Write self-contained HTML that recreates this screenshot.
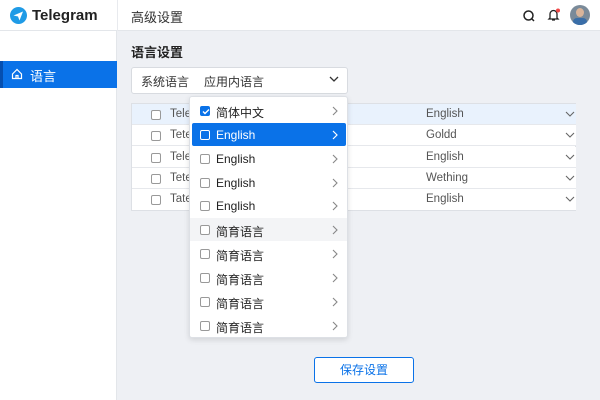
<!DOCTYPE html><html><head><meta charset="utf-8"><style>
*{margin:0;padding:0;box-sizing:border-box}
body{width:600px;height:400px;overflow:hidden;background:#eef0f4;font-family:"Liberation Sans","Noto Sans CJK SC",sans-serif;font-size:12px;color:#333;position:relative}
.abs{position:absolute}
.hdr{left:0;top:0;width:600px;height:31px;background:#fff;border-bottom:1px solid #e3e6ea}
.side{left:0;top:31px;width:117px;height:369px;background:#fff;border-right:1px solid #e3e6ea}
.cb{display:inline-block;width:10px;height:10px;border:1px solid #999;border-radius:2px;background:#fff}
.trow{left:132px;width:444px;height:21px;border-bottom:1px solid #e6e8ec;background:#fff;font-size:11.5px;color:#555}
.trow svg{position:absolute;left:433px;top:7px}
.dd{left:189px;top:96px;width:159px;height:242px;background:#fff;border:1px solid #dde0e5;border-radius:3px;box-shadow:0 2px 6px rgba(0,0,0,.12)}
.di{position:absolute;left:2px;width:154px;height:23px;font-size:12px;color:#222}
.di .cb{position:absolute;left:8px;top:7px}
.di span.t{position:absolute;left:24px;top:5px}
.di svg{position:absolute;left:140px;top:7px}
</style></head><body>
<div class="abs hdr"></div>
<svg class="abs" style="left:10px;top:7px" width="17" height="17" viewBox="0 0 17 17"><circle cx="8.5" cy="8.5" r="8.5" fill="#1f9be6"/><path d="M3.5 8.5 L13 4.5 L9.5 13.5 L8 9.5 Z" fill="#fff"/></svg>
<div class="abs" style="left:32px;top:7px;font-size:15px;font-weight:bold;color:#222">Telegram</div>
<div class="abs" style="left:117px;top:0;width:1px;height:31px;background:#e8eaee"></div>
<div class="abs" style="left:131px;top:7px;font-size:13px;color:#333">高级设置</div>
<svg class="abs" style="left:522px;top:9px" width="14" height="14"><circle cx="6.5" cy="6.5" r="4.5" fill="none" stroke="#222" stroke-width="1.5"/><path d="M10 10l2 2" stroke="#222" stroke-width="1.5"/></svg>
<svg class="abs" style="left:546px;top:7px" width="16" height="16"><path d="M4 11V7a3.5 3.5 0 0 1 7 0v4l1 1H3z M6 13h3" fill="none" stroke="#222" stroke-width="1.3"/><circle cx="12" cy="3.5" r="2" fill="#f04848"/></svg>
<div class="abs" style="left:570px;top:5px;width:20px;height:20px;border-radius:50%;background:#7a8a99;overflow:hidden"><div style="position:absolute;left:6px;top:3px;width:8px;height:9px;border-radius:50%;background:#d9b49a"></div><div style="position:absolute;left:3px;top:13px;width:14px;height:8px;background:#3a6ea8;border-radius:4px 4px 0 0"></div></div>
<div class="abs side"></div>
<div class="abs" style="left:0;top:61px;width:117px;height:27px;background:#0a72e8"></div>
<div class="abs" style="left:0;top:61px;width:3px;height:27px;background:#054fb0"></div>
<svg class="abs" style="left:11px;top:68px" width="12" height="12"><path d="M1.5 6L6 1.5 10.5 6V10.5H1.5Z M5 10.5V7.5h2v3" fill="none" stroke="#fff" stroke-width="1.2"/></svg>
<div class="abs" style="left:30px;top:66px;font-size:13px;color:#fff">语言</div>
<div class="abs" style="left:131px;top:42px;font-size:13px;font-weight:bold;color:#222">语言设置</div>
<div class="abs" style="left:131px;top:67px;width:217px;height:27px;background:#fff;border:1px solid #d8dbe0;border-radius:3px"></div>
<div class="abs" style="left:141px;top:73px;font-size:12px;color:#333">系统语言</div>
<div class="abs" style="left:204px;top:73px;font-size:12px;color:#333">应用内语言</div>
<svg class="abs" style="left:329px;top:76px" width="10" height="6"><path d="M1 1l4 4 4-4" fill="none" stroke="#333" stroke-width="1.3"/></svg>
<div class="abs" style="left:131px;top:103px;width:445px;height:108px;border:1px solid #dde0e5;background:#fff"></div>
<div class="abs trow" style="top:104px;background:#e9f2fd"><span class="cb" style="position:absolute;left:19px;top:6px"></span><span style="position:absolute;left:38px;top:4px">Tele</span><span style="position:absolute;left:294px;top:4px">English</span><svg width="10" height="6"><path d="M1 1l4 4 4-4" fill="none" stroke="#666" stroke-width="1.1"/></svg></div>
<div class="abs trow" style="top:125px"><span class="cb" style="position:absolute;left:19px;top:6px"></span><span style="position:absolute;left:38px;top:4px">Tete</span><span style="position:absolute;left:294px;top:4px">Goldd</span><svg width="10" height="6"><path d="M1 1l4 4 4-4" fill="none" stroke="#666" stroke-width="1.1"/></svg></div>
<div class="abs trow" style="top:147px"><span class="cb" style="position:absolute;left:19px;top:6px"></span><span style="position:absolute;left:38px;top:4px">Tele</span><span style="position:absolute;left:294px;top:4px">English</span><svg width="10" height="6"><path d="M1 1l4 4 4-4" fill="none" stroke="#666" stroke-width="1.1"/></svg></div>
<div class="abs trow" style="top:168px"><span class="cb" style="position:absolute;left:19px;top:6px"></span><span style="position:absolute;left:38px;top:4px">Tete</span><span style="position:absolute;left:294px;top:4px">Wething</span><svg width="10" height="6"><path d="M1 1l4 4 4-4" fill="none" stroke="#666" stroke-width="1.1"/></svg></div>
<div class="abs trow" style="top:189px;border-bottom:none"><span class="cb" style="position:absolute;left:19px;top:6px"></span><span style="position:absolute;left:38px;top:4px">Tate</span><span style="position:absolute;left:294px;top:4px">English</span><svg width="10" height="6"><path d="M1 1l4 4 4-4" fill="none" stroke="#666" stroke-width="1.1"/></svg></div>
<div class="abs dd">
<div class="di" style="top:2px"><span class="cb" style="background:#0a72e8;border-color:#0a72e8"></span><svg style="left:10px;top:9px" width="8" height="7"><path d="M1 3.5l2 2 4-4" fill="none" stroke="#fff" stroke-width="1.4"/></svg><span class="t">简体中文</span><svg width="6" height="10"><path d="M1 1l4 4-4 4" fill="none" stroke="#888" stroke-width="1.1"/></svg></div>
<div class="di" style="top:26px;background:#0a72e8;color:#fff;border-radius:2px"><span class="cb" style="background:transparent;border-color:#fff"></span><span class="t">English</span><svg width="6" height="10"><path d="M1 1l4 4-4 4" fill="none" stroke="#fff" stroke-width="1.2"/></svg></div>
<div class="di" style="top:50px"><span class="cb"></span><span class="t">English</span><svg width="6" height="10"><path d="M1 1l4 4-4 4" fill="none" stroke="#888" stroke-width="1.1"/></svg></div>
<div class="di" style="top:74px"><span class="cb"></span><span class="t">English</span><svg width="6" height="10"><path d="M1 1l4 4-4 4" fill="none" stroke="#888" stroke-width="1.1"/></svg></div>
<div class="di" style="top:97px"><span class="cb"></span><span class="t">English</span><svg width="6" height="10"><path d="M1 1l4 4-4 4" fill="none" stroke="#888" stroke-width="1.1"/></svg></div>
<div class="di" style="top:121px;background:#f3f4f6;left:0;width:157px"><span class="cb" style="left:10px"></span><span class="t" style="left:26px">简育语言</span><svg style="left:142px" width="6" height="10"><path d="M1 1l4 4-4 4" fill="none" stroke="#888" stroke-width="1.1"/></svg></div>
<div class="di" style="top:145px"><span class="cb"></span><span class="t">简育语言</span><svg width="6" height="10"><path d="M1 1l4 4-4 4" fill="none" stroke="#888" stroke-width="1.1"/></svg></div>
<div class="di" style="top:169px"><span class="cb"></span><span class="t">简育语言</span><svg width="6" height="10"><path d="M1 1l4 4-4 4" fill="none" stroke="#888" stroke-width="1.1"/></svg></div>
<div class="di" style="top:193px"><span class="cb"></span><span class="t">简育语言</span><svg width="6" height="10"><path d="M1 1l4 4-4 4" fill="none" stroke="#888" stroke-width="1.1"/></svg></div>
<div class="di" style="top:217px"><span class="cb"></span><span class="t">简育语言</span><svg width="6" height="10"><path d="M1 1l4 4-4 4" fill="none" stroke="#888" stroke-width="1.1"/></svg></div>
</div>
<div class="abs" style="left:314px;top:357px;width:100px;height:26px;border:1px solid #0a72e8;border-radius:3px;background:#fff;color:#0a72e8;text-align:center;line-height:24px;font-size:12px">保存设置</div>
</body></html>
